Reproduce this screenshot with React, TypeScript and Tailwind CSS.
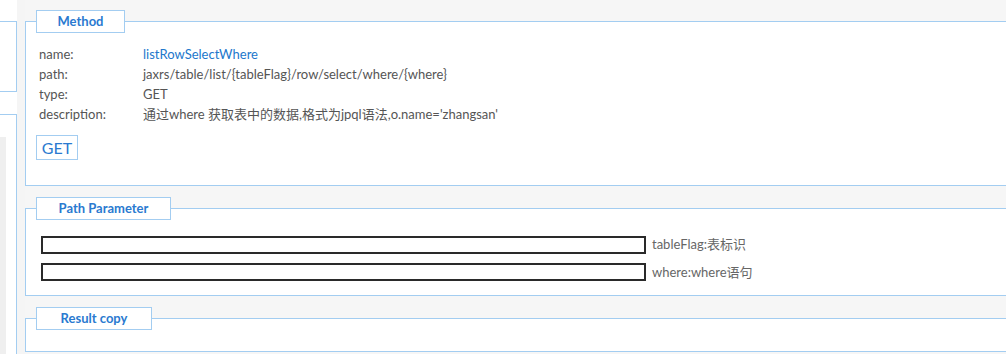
import React from "react";

const font = { fontFamily: 'Lato, "Noto Sans CJK SC", sans-serif' };

const methodRows = [
  { label: "name:", value: "listRowSelectWhere", link: true },
  { label: "path:", value: "jaxrs/table/list/{tableFlag}/row/select/where/{where}" },
  { label: "type:", value: "GET" },
  { label: "description:", value: "通过where 获取表中的数据,格式为jpql语法,o.name='zhangsan'" },
];

const params = [
  { name: "tableFlag", desc: "tableFlag:表标识" },
  { name: "where", desc: "where:where语句" },
];

const Legend: React.FC<{ width: string; children: React.ReactNode }> = ({ width, children }) => (
  <legend className={`${width} h-[23px] border border-[#a3cdf1] bg-white`}>
    <span className="block text-center text-[13px] font-bold leading-[21px] text-[#2a7ad0]">{children}</span>
  </legend>
);

export default function App() {
  return (
    <div className="flex h-[354px] w-[1006px] overflow-hidden bg-white text-[13px]" style={font}>
      {/* left tree panel, mostly scrolled out of view */}
      <div className="w-[17px] shrink-0 bg-white pt-[21px]">
        <div className="h-[71px] border-y border-r border-[#a3cdf1] bg-white" />
        <div className="mt-[22px] h-[260px] border-t border-r border-[#a3cdf1] bg-white pt-[22px]">
          <div className="h-full w-[6px] bg-[#efefef]" />
        </div>
      </div>
      <div className="w-[8px] shrink-0 bg-[#f5f5f5]" />

      {/* main */}
      <div className="w-[1100px] shrink-0 bg-[#f6f6f6] pt-[10px]">
        <fieldset className="h-[176px] border border-[#a3cdf1] bg-white pl-[10px]">
          <Legend width="w-[89px]">Method</Legend>
          <div className="pl-[3px] pt-[12px]">
            {methodRows.map((r) => (
              <div key={r.label} className="flex h-[20px] items-center text-[#555]">
                <span className="w-[104px] shrink-0">{r.label}</span>
                <span className={r.link ? "text-[#2277cc]" : ""}>{r.value}</span>
              </div>
            ))}
          </div>
          <button className="mt-[10px] h-[25px] w-[42px] border border-[#a3cdf1] bg-white text-[16px] leading-[23px] text-[#2a7ad0]">
            GET
          </button>
        </fieldset>

        <fieldset className="mt-[11px] h-[99px] border border-[#a3cdf1] bg-white pl-[10px]">
          <Legend width="w-[135px]">Path Parameter</Legend>
          <div className="flex flex-col gap-[8px] pl-[5px] pt-[15px]">
            {params.map((p) => (
              <div key={p.name} className="flex items-center">
                <input className="h-[18px] w-[605px] border-2 border-[#2a2a2a] bg-white outline-none" />
                <span className="ml-[6px] text-[#666]">{p.desc}</span>
              </div>
            ))}
          </div>
        </fieldset>

        <fieldset className="mt-[11px] h-[45px] border border-[#a3cdf1] bg-white pl-[10px]">
          <Legend width="w-[116px]">Result copy</Legend>
        </fieldset>
      </div>
    </div>
  );
}
